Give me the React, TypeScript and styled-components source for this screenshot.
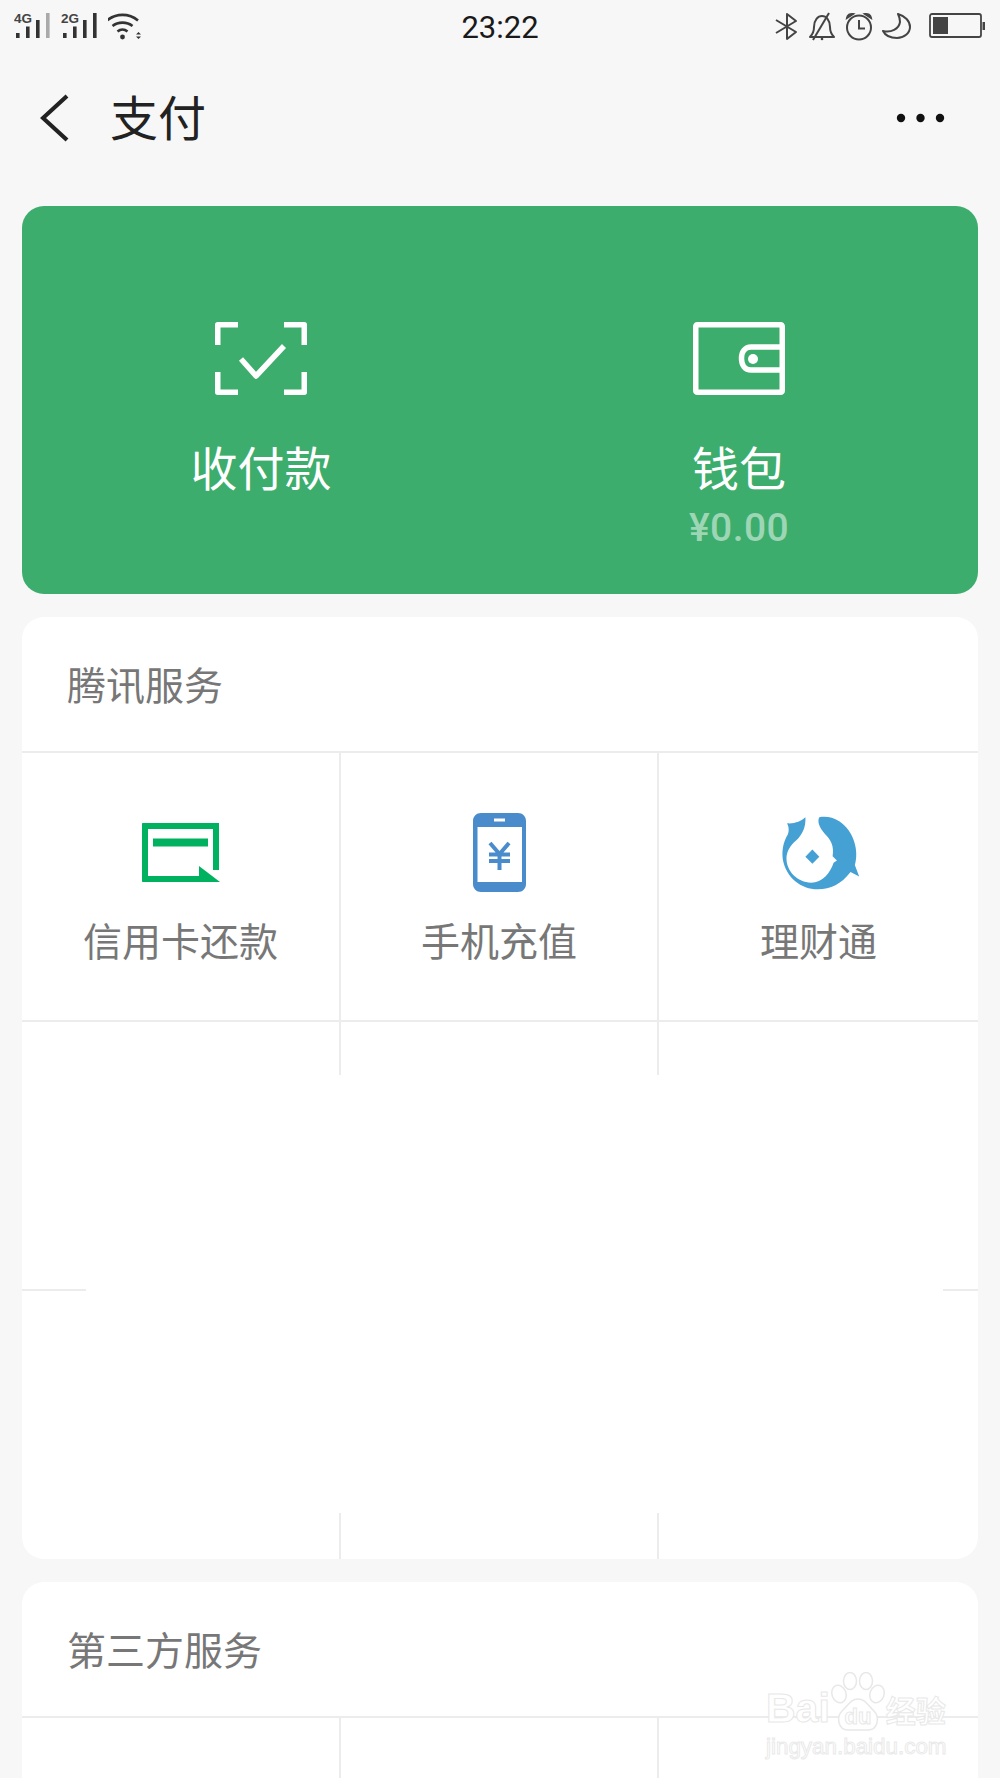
import styled, { createGlobalStyle } from 'styled-components';

const CJK = '"Noto Sans CJK SC", "Noto Sans", sans-serif';

const GlobalStyle = createGlobalStyle`
  html, body {
    margin: 0;
    padding: 0;
    background: #f7f7f7;
  }
`;

const Page = styled.div`
  position: relative;
  width: 1000px;
  height: 1778px;
  overflow: hidden;
  background: #f7f7f7;
  font-family: ${CJK};
`;

const StatusBar = styled.div`
  display: grid;
  grid-template-columns: 1fr auto 1fr;
  align-items: center;
  height: 52px;
  padding: 0 12px 0 14px;
  box-sizing: border-box;
`;

const StatusGroup = styled.div<{ $end?: boolean }>`
  display: flex;
  align-items: center;
  justify-content: ${(p) => (p.$end ? 'flex-end' : 'flex-start')};
  height: 52px;
`;

const Clock = styled.div`
  font-family: Roboto, 'Liberation Sans', sans-serif;
  font-size: 31px;
  line-height: 52px;
  padding-top: 2px;
  margin-right: 2px;
  color: #1a1a1a;
`;

const Nav = styled.div`
  display: flex;
  align-items: center;
  height: 132px;
  padding: 0 54px 0 40px;
  margin-bottom: 22px;
`;

const NavTitle = styled.div`
  margin-left: 40px;
  padding-bottom: 6px;
  flex: 1;
  font-size: 48px;
  line-height: 60px;
  font-weight: 400;
  color: #222;
`;

const Content = styled.div`
  display: flex;
  flex-direction: column;
  gap: 23px;
  padding: 0 22px;
`;

const WalletCard = styled.div`
  display: grid;
  grid-template-columns: 1fr 1fr;
  height: 388px;
  background: #3cad6c;
  border-radius: 22px;
`;

const WalletItem = styled.div`
  display: flex;
  flex-direction: column;
  align-items: center;
  padding-top: 116px;
  color: #fff;
`;

const WalletLabel = styled.div`
  margin-top: 36px;
  margin-bottom: 2px;
  font-size: 47px;
  line-height: 70px;
  font-weight: 400;
`;

const Balance = styled.div`
  font-family: Roboto, 'Liberation Sans', sans-serif;
  font-size: 39px;
  line-height: 50px;
  letter-spacing: 0.4px;
  font-weight: 500;
  color: rgba(255, 255, 255, 0.5);
`;

const ServiceCard = styled.div<{ $height: number }>`
  position: relative;
  height: ${(p) => p.$height}px;
  background: #fff;
  border-radius: 22px;
  overflow: hidden;
  flex-shrink: 0;
`;

const SectionTitle = styled.div`
  height: 136px;
  padding-left: 45px;
  box-sizing: border-box;
  border-bottom: 2px solid #ececec;
  font-size: 39px;
  line-height: 132px;
  color: #777;
`;

const ServiceGrid = styled.div`
  display: grid;
  grid-template-columns: 319px 318px 319px;
  grid-auto-rows: 269px;
`;

const Cell = styled.div<{ $last?: boolean }>`
  display: flex;
  flex-direction: column;
  align-items: center;
  box-sizing: border-box;
  padding-top: 57px;
  border-right: ${(p) => (p.$last ? 'none' : '2px solid #ececec')};
  border-bottom: 2px solid #ececec;

  &:nth-last-child(-n + 3) {
    border-bottom: none;
  }
`;

const CellIcon = styled.div`
  display: flex;
  align-items: center;
  justify-content: center;
  height: 84px;
`;

const CellLabel = styled.div`
  margin-top: 17px;
  font-size: 39px;
  line-height: 56px;
  color: #777;
`;

/* the source screenshot has this part of the card painted over */
const ErasedPatch = styled.div`
  position: absolute;
  left: 64px;
  top: 458px;
  width: 857px;
  height: 438px;
  background: #fff;
`;

const Watermark = styled.div`
  position: absolute;
  left: 766px;
  top: 1672px;
  width: 182px;
  color: #fff;
`;

const WatermarkTop = styled.div`
  display: flex;
  align-items: flex-end;
  height: 60px;
`;

const WatermarkBrand = styled.span`
  font-family: 'Liberation Sans', sans-serif;
  font-size: 41px;
  line-height: 48px;
  font-weight: 700;
  color: #fff;
  -webkit-text-stroke: 1px #e8e8e8;
`;

const WatermarkCn = styled.span`
  font-size: 30px;
  line-height: 46px;
  font-weight: 700;
  color: #fff;
  -webkit-text-stroke: 1px #e8e8e8;
`;

const WatermarkUrl = styled.div`
  font-family: 'Liberation Sans', sans-serif;
  font-size: 22.4px;
  line-height: 28px;
  margin-top: 1px;
  color: #fff;
  -webkit-text-stroke: 1px #eaeaea;
  white-space: nowrap;
`;

const Signal = ({ label, dim }: { label: string; dim?: boolean }) => (
  <svg width="47" height="30" viewBox="0 0 47 30" style={{ display: 'block' }}>
    <text x="0" y="11" fontFamily="Liberation Sans, sans-serif" fontSize="13.500" fontWeight="700" fill="#444">
      {label}
    </text>
    <rect x="2" y="21" width="3.6" height="5" fill="#333" />
    <rect x="12" y="14.5" width="3.6" height="11.5" fill="#333" />
    <rect x="22" y="8" width="3.6" height="18" fill="#333" />
    <rect x="32" y="1" width="3.6" height="25" fill={dim ? '#aaa' : '#333'} />
  </svg>
);

const Wifi = () => (
  <svg width="38" height="30" viewBox="3 0 38 30" fill="none" stroke="#333" strokeWidth="2.6" style={{ display: 'block' }}>
    <path d="M2 8.5C11 1 24 1 33 8.5" />
    <path d="M7.5 14C13 9.5 22 9.5 27.5 14" />
    <path d="M12.5 19.5C15.5 17 19.5 17 22.5 19.5" />
    <circle cx="17.5" cy="25" r="2.4" fill="#333" stroke="none" />
    <path d="M31 22.5L33.5 20L36 22.5ZM31 24.5L33.5 27L36 24.5Z" fill="#333" stroke="none" />
  </svg>
);

const StatusIcons = () => (
  <svg width="216" height="30" viewBox="0 0 216 30" fill="none" stroke="#444" strokeWidth="2" style={{ display: 'block' }}>
    <path d="M4 8L24 20L15 27V2L24 9L4 21" strokeLinejoin="round" />
    <path d="M38 25C41 22 42 19 42 15C42 8 46 4 50 4C54 4 58 8 58 15C58 19 59 22 62 25Z" strokeLinejoin="round" />
    <path d="M41 28L57 1" />
    <circle cx="50" cy="27" r="1.3" fill="#444" stroke="none" />
    <circle cx="87" cy="15.500" r="12" />
    <path d="M87 8V16.500H93" />
    <path d="M75 6C75.500 3 78 1.500 81 2L75 6ZM99 6C98.500 3 96 1.500 93 2L99 6Z" fill="#444" />
    <path d="M126 2C133 4 138 9 138 15C138 21 132 26 125 26C118 26 113 23 111 19C119 21 127 17 128 10C128 7 127 4 126 2Z" strokeLinejoin="round" />
    <rect x="158" y="2" width="51" height="23" rx="2" strokeWidth="1.8" />
    <rect x="161" y="5" width="15" height="17" fill="#444" stroke="none" />
    <rect x="210.5" y="10" width="2.5" height="8" fill="#444" stroke="none" />
  </svg>
);

const BackIcon = () => (
  <svg width="30" height="50" viewBox="0 0 30 50" fill="none" stroke="#222" strokeWidth="4.2" style={{ display: 'block' }}>
    <path d="M27 3L3 25L27 47" />
  </svg>
);

const MoreIcon = () => (
  <svg width="50" height="10" viewBox="0 0 50 10" fill="#111" style={{ display: 'block' }}>
    <circle cx="5" cy="5" r="4.2" />
    <circle cx="24.5" cy="5" r="4.2" />
    <circle cx="44" cy="5" r="4.2" />
  </svg>
);

const ScanIcon = () => (
  <svg width="92" height="73" viewBox="0 0 92 73" fill="none" stroke="#fff" strokeWidth="5.5" style={{ display: 'block' }}>
    <path d="M23 2.750H2.750V23M69 2.750H89.250V23M2.750 50V70.250H23M89.250 50V70.250H69" strokeLinejoin="round" />
    <path d="M26 37L41 54L69 24" strokeLinejoin="round" />
  </svg>
);

const WalletIcon = () => (
  <svg width="92" height="73" viewBox="0 0 92 73" fill="none" stroke="#fff" strokeWidth="5.5" style={{ display: 'block' }}>
    <rect x="2.750" y="2.750" width="86.500" height="67.500" rx="1.5" />
    <path d="M89 25H58C52 25 48.500 30 48.500 36.500C48.500 43 52 48 58 48H89" />
    <circle cx="60" cy="37" r="5" fill="#fff" stroke="none" />
  </svg>
);

const CreditIcon = () => (
  <svg width="78" height="59" viewBox="0 0 78 59" style={{ display: 'block' }}>
    <path
      d="M1 0H77V47H71V6H6V53H57V59H1C0.400 59 0 58.600 0 58V1C0 0.400 0.400 0 1 0Z"
      fill="#00b25f"
    />
    <rect x="11" y="15.500" width="55" height="8" fill="#00b25f" />
    <path d="M57 43L78 59H57Z" fill="#00b25f" />
  </svg>
);

const PhoneIcon = () => (
  <svg width="53" height="79" viewBox="0 0 53 79" style={{ display: 'block' }}>
    <path
      fillRule="evenodd"
      fill="#4a8ccb"
      d="M8 0H45C49.500 0 53 3.500 53 8V71C53 75.500 49.500 79 45 79H8C3.500 79 0 75.500 0 71V8C0 3.500 3.500 0 8 0ZM4.500 14V69H49V14ZM21 5.500V8.500H32V5.500Z"
    />
    <path
      d="M17 30L26.500 41L36 30M16 41.500H37M16 48H37M26.500 41V57"
      fill="none"
      stroke="#4a8ccb"
      strokeWidth="4"
    />
  </svg>
);

const LicaiIcon = () => (
  <svg width="80" height="78" viewBox="84 75 240 235" style={{ display: 'block', overflow: 'visible' }}>
    <path
      fill="#45a0d4"
      d="M163 88C150 100 130 108 108 106C114 118 114 130 110 140C95 165 92 190 95 215C105 270 150 305 200 305C240 305 270 290 299 253L325 266L312 232C325 190 310 130 265 100C245 88 225 84 205 88C198 100 205 120 222 138C240 155 250 175 245 205L258 218L248 225C238 255 215 285 180 285C140 285 105 250 106 210C107 190 118 172 135 158C155 140 165 115 163 88Z"
    />
    <path fill="#45a0d4" d="M184 185L205 207L184 228L163 207Z" />
  </svg>
);

const Paw = () => (
  <svg width="56" height="60" viewBox="0 0 56 60" fill="#fff" stroke="#e8e8e8" strokeWidth="1.500" style={{ display: 'block' }}>
    <ellipse cx="9" cy="22" rx="7" ry="9" transform="rotate(-20 9 22)" />
    <ellipse cx="20" cy="9" rx="6.500" ry="8.500" />
    <ellipse cx="36" cy="9" rx="6.500" ry="8.500" />
    <ellipse cx="47" cy="22" rx="7" ry="9" transform="rotate(20 47 22)" />
    <path d="M28 27C36 27 38 34 44 39C50 45 48 58 38 58H18C8 58 6 45 12 39C18 34 20 27 28 27Z" />
    <text x="28" y="52" textAnchor="middle" fontFamily="Liberation Sans, sans-serif" fontSize="22" fontWeight="700" strokeWidth="1">
      du
    </text>
  </svg>
);

const App = () => (
  <Page>
    <GlobalStyle />
    <StatusBar>
      <StatusGroup>
        <Signal label="4G" dim />
        <Signal label="2G" />
        <Wifi />
      </StatusGroup>
      <Clock>23:22</Clock>
      <StatusGroup $end>
        <StatusIcons />
      </StatusGroup>
    </StatusBar>

    <Nav>
      <BackIcon />
      <NavTitle>支付</NavTitle>
      <MoreIcon />
    </Nav>

    <Content>
      <WalletCard>
        <WalletItem>
          <ScanIcon />
          <WalletLabel>收付款</WalletLabel>
        </WalletItem>
        <WalletItem>
          <WalletIcon />
          <WalletLabel>钱包</WalletLabel>
          <Balance>¥0.00</Balance>
        </WalletItem>
      </WalletCard>

      <ServiceCard $height={942}>
        <SectionTitle>腾讯服务</SectionTitle>
        <ServiceGrid>
          <Cell>
            <CellIcon>
              <CreditIcon />
            </CellIcon>
            <CellLabel>信用卡还款</CellLabel>
          </Cell>
          <Cell>
            <CellIcon>
              <PhoneIcon />
            </CellIcon>
            <CellLabel>手机充值</CellLabel>
          </Cell>
          <Cell $last>
            <CellIcon>
              <LicaiIcon />
            </CellIcon>
            <CellLabel>理财通</CellLabel>
          </Cell>
          <Cell />
          <Cell />
          <Cell $last />
          <Cell />
          <Cell />
          <Cell $last />
        </ServiceGrid>
        <ErasedPatch />
      </ServiceCard>

      <ServiceCard $height={300}>
        <SectionTitle>第三方服务</SectionTitle>
        <ServiceGrid>
          <Cell />
          <Cell />
          <Cell $last />
        </ServiceGrid>
      </ServiceCard>
    </Content>

    <Watermark>
      <WatermarkTop>
        <WatermarkBrand>Bai</WatermarkBrand>
        <Paw />
        <WatermarkCn>经验</WatermarkCn>
      </WatermarkTop>
      <WatermarkUrl>jingyan.baidu.com</WatermarkUrl>
    </Watermark>
  </Page>
);

export default App;
